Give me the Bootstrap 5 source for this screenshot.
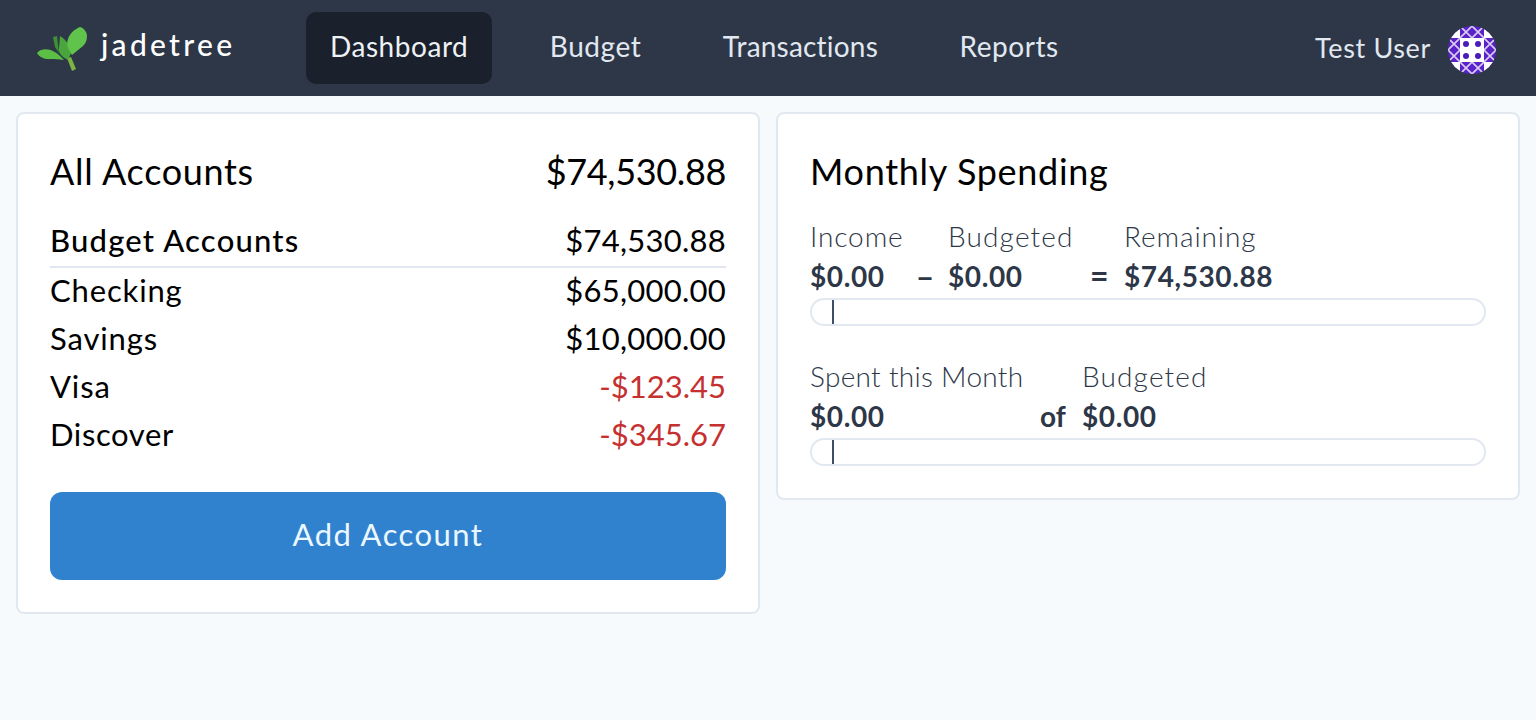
<!DOCTYPE html>
<html lang="en"><head><meta charset="utf-8"><title>Jadetree</title>
<link href="https://cdn.jsdelivr.net/npm/bootstrap@5.3.0/dist/css/bootstrap.min.css" rel="stylesheet">
<style>
html,body{height:100%}
body{background:#f7fafc;font-family:Lato,"Liberation Sans",sans-serif;color:#000;overflow:hidden}
.topbar{height:96px;background:#2d3748;padding:12px 40px 12px 37px}
.brand{width:269px;gap:14px;color:#fff;font-size:30px;font-weight:500;letter-spacing:3.3px;text-decoration:none}
.brand-mark{margin-top:2px}
.brand-word{padding-bottom:8px}
.menu-link{height:72px;padding:0 24px 4px;margin-right:33.5px;border-radius:10px;color:#e2e8f0;font-size:28px;letter-spacing:.55px;text-decoration:none}
.menu-link.here{background:#1a202c;color:#edf2f7}
.menu-link.snug{letter-spacing:.2px}
.who{color:#e2e8f0;font-size:27px;gap:17px;letter-spacing:.65px}
.who-pic{margin-top:4px}
.panes{padding:16px;gap:16px}
.pane{flex:1 1 0;background:#fff;border:2px solid #e2e8f0;border-radius:8px;padding:32px}
.head-line{font-size:36px;line-height:50px;margin-bottom:20px;letter-spacing:.68px}
.head-amt{letter-spacing:-.35px}
.sub-line{font-size:31px;line-height:48px;font-weight:500;border-bottom:2px solid #e2e8f0;height:52px;margin-bottom:-2px;letter-spacing:1.2px}
.sub-amt{letter-spacing:.25px;font-weight:400}
.acct-line{font-size:31px;line-height:48px;letter-spacing:.85px}
.acct-line.snug{letter-spacing:.6px}
.acct-amt{letter-spacing:.25px}
.neg{color:#c53030;letter-spacing:0}
.add-btn{background:#3182ce;border:0;border-radius:12px;color:#ebf8ff;font-size:31px;height:88px;margin-top:34px;padding-bottom:10px;letter-spacing:1.45px}
.add-btn:hover{background:#3182ce;color:#ebf8ff}
.metric{color:#2d3748;font-size:28px}
.metric-label{font-weight:300;line-height:40px;white-space:nowrap;letter-spacing:.9px}
.metric-label.tight{letter-spacing:.3px}
.metric-label.wide{letter-spacing:1.15px}
.metric-val{font-weight:700;line-height:40px;white-space:nowrap;letter-spacing:.6px}
.c-income{width:92px}.c-minus{width:46px;text-align:center;font-weight:700;line-height:40px;font-size:32px}
.c-budget{width:140px}.c-eq{width:36px;padding-left:2px;font-weight:700;line-height:40px;font-size:32px}
.c-spent{width:230px}.c-of{width:42px;font-weight:700;line-height:40px}
.track{height:28px;border:2px solid #e2e8f0;border-radius:14px;margin:2px 0 0;position:relative}
.tick{position:absolute;left:20px;top:0;bottom:0;width:2px;background:#3f4d6a}
.gap-top{margin-top:30px}
.spacer{font-size:28px}
</style></head><body>
<nav class="topbar d-flex align-items-center">
  <a class="brand d-flex align-items-center" href="#">
    <svg class="brand-mark" width="50" height="44" viewBox="0 0 50 44" aria-hidden="true">
      <path d="M30 31l4-1 5 12-4 2z" fill="#7cb342"/>
      <path d="M0 26C4 21 15 19 27 33 17 31 5 35 0 26z" fill="#5bbf45"/>
      <path d="M16 10l4-1 2 17-4-6z" fill="#3f8f35"/>
      <path d="M23 9c6 4 11 10 11 17l-3 7c-6-3-10-7-9-12z" fill="#48a63c"/>
      <path d="M43 0c4 1 7 5 7 9 0 5-2 8-4 10L35 28C31 22 29 17 31 12 33 6 38 2 43 0z" fill="#5fc34c"/>
    </svg>
    <span class="brand-word">jadetree</span>
  </a>
  <a class="menu-link here d-flex align-items-center" href="#">Dashboard</a>
  <a class="menu-link d-flex align-items-center" href="#">Budget</a>
  <a class="menu-link snug d-flex align-items-center" href="#">Transactions</a>
  <a class="menu-link d-flex align-items-center" href="#">Reports</a>
  <div class="who ms-auto d-flex align-items-center">
    <span>Test User</span>
    <svg class="who-pic" width="48" height="48" viewBox="0 0 48 48" aria-hidden="true">
      <defs><clipPath id="cc"><circle cx="24" cy="24" r="24"/></clipPath>
      <pattern id="pp" width="12" height="12" patternUnits="userSpaceOnUse"><rect width="12" height="12" fill="#5a22c8"/><path d="M0 0L12 12M12 0L0 12" stroke="#d9cdf5" stroke-width="1.6"/></pattern></defs>
      <g clip-path="url(#cc)"><rect width="48" height="48" fill="url(#pp)"/>
      <rect x="12" y="12" width="24" height="24" fill="#fff"/>
      <rect x="0" y="0" width="12" height="12" fill="#fff"/><rect x="36" y="0" width="12" height="12" fill="#fff"/><rect x="0" y="36" width="12" height="12" fill="#fff"/><rect x="36" y="36" width="12" height="12" fill="#fff"/>
      <circle cx="18" cy="18" r="3" fill="#4a1bb8"/><circle cx="30" cy="18" r="3" fill="#4a1bb8"/><circle cx="18" cy="30" r="3" fill="#4a1bb8"/><circle cx="30" cy="30" r="3" fill="#4a1bb8"/></g>
    </svg>
  </div>
</nav>
<main class="panes d-flex align-items-start">
  <section class="pane">
    <div class="head-line d-flex justify-content-between"><span>All Accounts</span><span class="head-amt">$74,530.88</span></div>
    <div class="sub-line d-flex justify-content-between"><span>Budget Accounts</span><span class="sub-amt">$74,530.88</span></div>
    <div class="acct-line d-flex justify-content-between"><span>Checking</span><span class="acct-amt">$65,000.00</span></div>
    <div class="acct-line d-flex justify-content-between"><span>Savings</span><span class="acct-amt">$10,000.00</span></div>
    <div class="acct-line d-flex justify-content-between"><span>Visa</span><span class="neg">-$123.45</span></div>
    <div class="acct-line snug d-flex justify-content-between"><span>Discover</span><span class="neg">-$345.67</span></div>
    <button type="button" class="btn add-btn w-100">Add Account</button>
  </section>
  <section class="pane">
    <div class="head-line">Monthly Spending</div>
    <div class="metric">
      <div class="d-flex">
        <div class="c-income"><div class="metric-label">Income</div><div class="metric-val">$0.00</div></div>
        <div class="c-minus"><div class="metric-label spacer">&nbsp;</div>–</div>
        <div class="c-budget"><div class="metric-label wide">Budgeted</div><div class="metric-val">$0.00</div></div>
        <div class="c-eq"><div class="metric-label spacer">&nbsp;</div>=</div>
        <div><div class="metric-label">Remaining</div><div class="metric-val">$74,530.88</div></div>
      </div>
      <div class="track"><div class="tick"></div></div>
      <div class="d-flex gap-top">
        <div class="c-spent"><div class="metric-label tight">Spent this Month</div><div class="metric-val">$0.00</div></div>
        <div class="c-of"><div class="metric-label">&nbsp;</div>of</div>
        <div><div class="metric-label wide">Budgeted</div><div class="metric-val">$0.00</div></div>
      </div>
      <div class="track"><div class="tick"></div></div>
    </div>
  </section>
</main>
</body></html>
